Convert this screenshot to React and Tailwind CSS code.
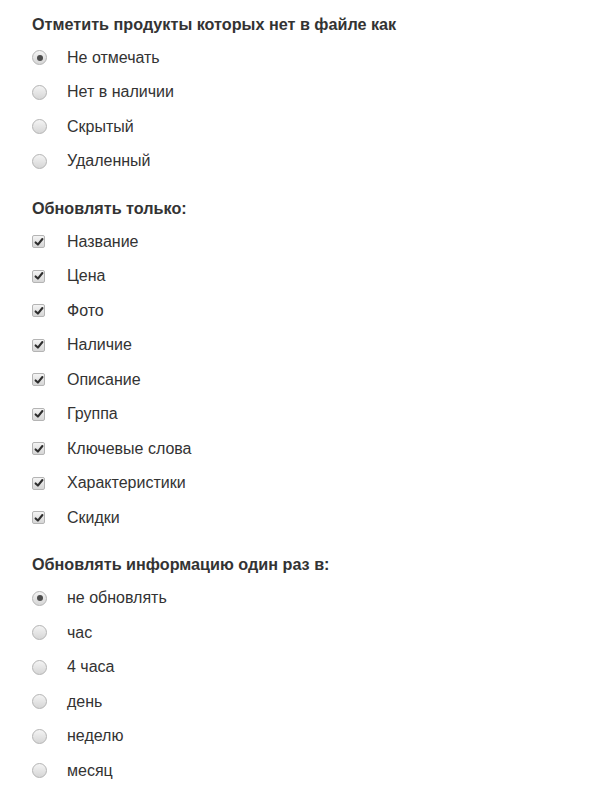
import React from "react";

function Radio({ checked }) {
  return (
    <span className="relative flex h-[15px] w-[15px] shrink-0 items-center justify-center rounded-full border border-[#b4b4b4] bg-gradient-to-b from-[#f4f4f4] to-[#d6d6d6]">
      {checked && <span className="h-[6px] w-[6px] rounded-full bg-[#4c4c4c]" />}
    </span>
  );
}

function Check() {
  return (
    <span className="flex h-[13px] w-[13px] shrink-0 items-center justify-center rounded-[2px] border border-[#b4b4b4] bg-gradient-to-b from-[#f4f4f4] to-[#d6d6d6]">
      <svg width="10" height="10" viewBox="0 0 10 10">
        <path d="M1.6 5.4 L3.9 7.6 L8.4 2" fill="none" stroke="#2e2e2e" strokeWidth="2.1" strokeLinecap="round" strokeLinejoin="round" />
      </svg>
    </span>
  );
}

function Row({ children, control }) {
  return (
    <div className="flex h-[34.5px] items-center">
      <span className="flex w-[35px] shrink-0">{control}</span>
      <span className="text-[16px] text-[#333]">{children}</span>
    </div>
  );
}

function Heading({ children, first }) {
  return (
    <div className={`flex h-[33.5px] items-center text-[16.2px] font-bold text-[#333] ${first ? "" : "mt-[12.5px]"}`}>
      {children}
    </div>
  );
}

export default function App() {
  const s1 = ["Не отмечать", "Нет в наличии", "Скрытый", "Удаленный"];
  const s2 = ["Название", "Цена", "Фото", "Наличие", "Описание", "Группа", "Ключевые слова", "Характеристики", "Скидки"];
  const s3 = ["не обновлять", "час", "4 часа", "день", "неделю", "месяц"];
  return (
    <div className="min-h-[798px] w-[589px] bg-white pl-[32px] pt-[7px]" style={{ fontFamily: '"Liberation Sans", Arial, sans-serif' }}>
      <Heading first>Отметить продукты которых нет в файле как</Heading>
      {s1.map((t, i) => (
        <Row key={t} control={<Radio checked={i === 0} />}>{t}</Row>
      ))}
      <Heading>Обновлять только:</Heading>
      {s2.map((t) => (
        <Row key={t} control={<Check />}>{t}</Row>
      ))}
      <Heading>Обновлять информацию один раз в:</Heading>
      {s3.map((t, i) => (
        <Row key={t} control={<Radio checked={i === 0} />}>{t}</Row>
      ))}
    </div>
  );
}
